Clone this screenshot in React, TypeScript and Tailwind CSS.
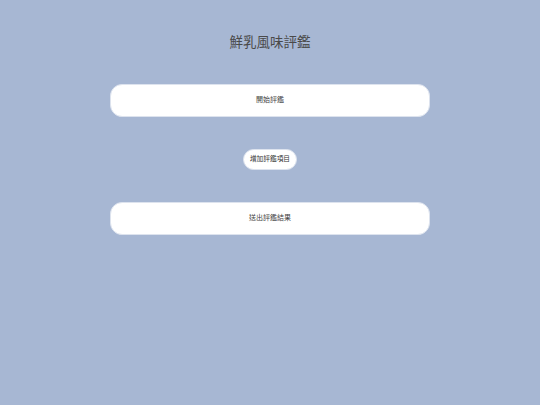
import React from 'react';

const font = { fontFamily: '"Liberation Sans", "Noto Sans CJK TC", sans-serif' };

export default function App() {
    return (
        <div className="w-[540px] h-[405px] bg-[#a7b7d3] flex flex-col items-center" style={font}>
            <h1 className="mt-[34px] text-[13.5px] leading-[18px] text-[#4a4a4a] font-normal">鮮乳風味評鑑</h1>

            <button className="mt-[32px] w-[320px] h-[33px] bg-white rounded-[12px] text-[7px] text-[#444] border border-[#dde3ee]">
                開始評鑑
            </button>

            <button className="mt-[32px] w-[54px] h-[21px] bg-white rounded-full text-[6.7px] text-[#333] border border-[#dde3ee]">
                增加評鑑項目
            </button>

            <button className="mt-[32px] w-[320px] h-[33px] bg-white rounded-[12px] text-[7px] text-[#444] border border-[#dde3ee]">
                送出評鑑結果
            </button>
        </div>
    );
}
